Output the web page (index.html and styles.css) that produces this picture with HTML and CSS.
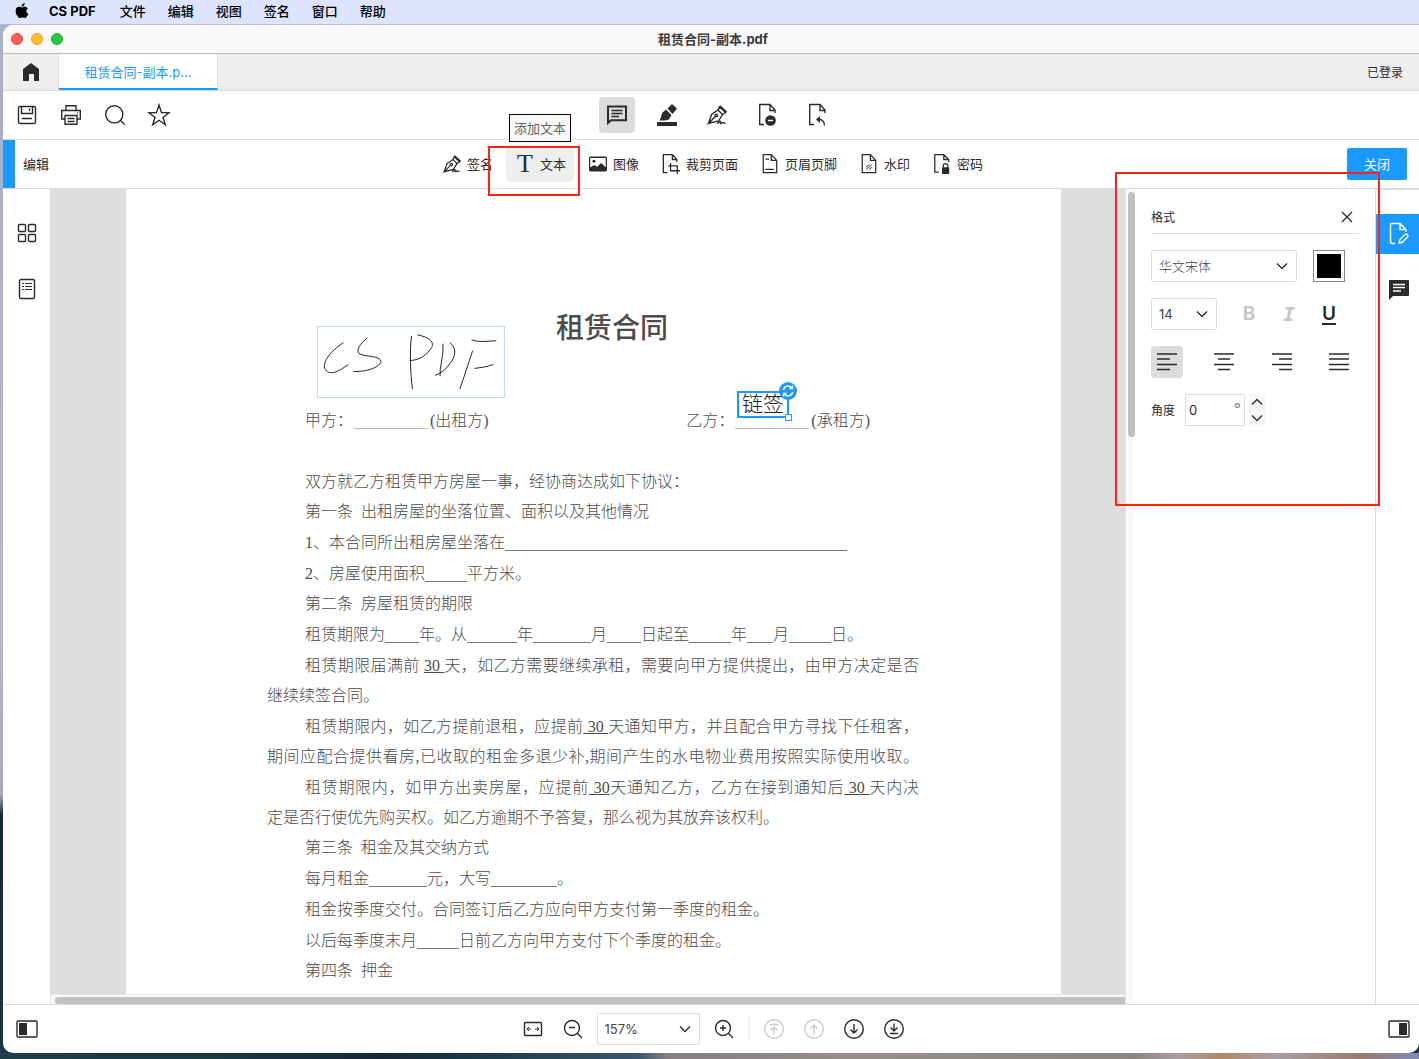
FILE: index.html
```html
<!DOCTYPE html>
<html lang="zh-CN">
<head>
<meta charset="utf-8">
<title>租赁合同-副本.pdf</title>
<link rel="stylesheet" href="styles.css">
</head>
<body>
<svg class="defs" aria-hidden="true">
  <symbol id="pen" viewBox="0 0 20 20"><path d="M1.500 18.500 4.500 9.500 11 5l4.500 4.500-4 6.500-10 2.500L8 11.800M11 5l1.500-3 6 5.500-3 2M12.500 2l.8-.8 6 5.500-.8.8"/><circle cx="9.200" cy="10.500" r="1.300"/><path d="M10 18.500c2-1 3-3 3.500-2s-1 2.500.5 2 1-1.200 2-.8.500 1 2.500.3"/></symbol>
  <symbol id="chevron" viewBox="0 0 12 12"><path d="m1 3.500 5 5 5-5"/></symbol>
</svg>

<nav class="menubar" aria-label="菜单栏">
  <svg class="apple" viewBox="0 0 14 17"><path d="M9.900 0c.1 1.100-.3 2-.9 2.700-.6.8-1.500 1.200-2.400 1.200C6.500 2.900 7 2 7.500 1.400 8.100.6 9.100.1 9.900 0ZM13.300 5.800c-1.100.7-1.700 1.600-1.700 2.800 0 1.400.8 2.500 2.100 3-.3.900-.8 1.800-1.400 2.600-.7 1-1.300 1.800-2.300 1.800s-1.400-.6-2.600-.6-1.600.6-2.600.6-1.700-.9-2.400-1.900C.9 12.300.2 10.300.2 8.500c0-2.900 1.800-4.400 3.700-4.400 1.100 0 2 .7 2.700.7.700 0 1.700-.8 3-.8 1.600 0 2.900.7 3.700 1.800Z"/></svg>
  <strong>CS PDF</strong>
  <a href="#">文件</a><a href="#">编辑</a><a href="#">视图</a><a href="#">签名</a><a href="#">窗口</a><a href="#">帮助</a>
</nav>

<div class="window">
  <header class="titlebar">
    <span class="lights"><i class="light red"></i><i class="light yellow"></i><i class="light green"></i></span>
    <strong>租赁合同-副本.pdf</strong>
  </header>

  <div class="tabs">
    <button class="home" aria-label="主页"><svg class="icon" viewBox="0 0 20 20"><path class="solid" d="M10 1 18 7v12h-5v-7H8v7H2V7Z"/></svg></button>
    <button class="tab">租赁合同-副本.p...</button>
    <span class="login">已登录</span>
  </div>

  <div class="toolbar">
    <div class="file-tools">
      <button aria-label="保存"><svg class="icon" viewBox="0 0 20 20"><rect x="1.500" y="1.500" width="17" height="17" rx="1.500"/><path d="M4.500 1.500v7h11v-7M5 13.500h10M12.500 3.500V6"/></svg></button>
      <button aria-label="打印"><svg class="icon" viewBox="0 0 20 20"><path d="M5 5V.7h10V5M4 14H.7V5.500h18.600V14H16M4 10.500h12v8.800H4ZM6.500 13.500h7M6.500 16.500h7"/><circle class="solid" cx="16.500" cy="8" r=".7"/></svg></button>
      <button aria-label="搜索"><svg class="icon" viewBox="0 0 20 20"><circle cx="9.300" cy="9.300" r="8.600"/><path d="m15.500 15.500 4.300 4.300"/></svg></button>
      <button aria-label="收藏"><svg class="icon" viewBox="0 0 20 20"><path d="m10 0 2.500 7.500 7.500.2-6 4.800 2.300 7.300L10 15.300l-6.300 4.500L6 12.500 0 7.700l7.500-.2Z"/></svg></button>
    </div>
    <div class="mode-tools">
      <button class="mode active" aria-label="注释"><svg class="icon" viewBox="0 0 20 20"><path class="bold" d="M1 18V1.500h18v13.700H4Z"/><path d="M4.500 5.500h11M4.500 8.500h11M4.500 11.500H12"/></svg></button>
      <button class="mode" aria-label="高亮"><svg class="icon" viewBox="0 0 20 20"><path class="solid" d="M0 17h20v4H0ZM2.500 15.500 4 12l1-4L9 4.500 14.500 10 12 14.500l-4 1ZM10.500 3.500 15-1l5 4.500-4.500 5.500Z"/></svg></button>
      <button class="mode" aria-label="签名"><svg class="icon"><use href="#pen"/></svg></button>
      <button class="mode" aria-label="删除页面"><svg class="icon" viewBox="0 0 20 20"><path d="M7 19.500H2.700V-.5H13L18 5v3M13 0v5.500h5"/><circle class="solid" cx="13.500" cy="15.500" r="5.300"/><path class="white" d="M11 15.500h5"/></svg></button>
      <button class="mode" aria-label="撤销页面"><svg class="icon" viewBox="0 0 20 20"><path d="M7 19.500H2.700V-.5H13L18 5v3M13 0v5.500h5M10.500 14.500c4-.5 7 1.500 7 6"/><path class="solid" d="m9 14.500 4-3.500v7Z"/></svg></button>
    </div>
  </div>

  <div class="editbar">
    <h2>编辑</h2>
    <div class="edit-tools">
      <button><svg class="icon"><use href="#pen"/></svg>签名</button>
      <div class="text-tool">
        <button class="active" aria-describedby="tip"><span class="big-t">T</span>文本</button>
        <span class="tooltip" id="tip" role="tooltip">添加文本</span>
        <span class="mark"></span>
      </div>
      <button><svg class="icon" viewBox="0 0 20 20"><rect x=".7" y="2.500" width="18.600" height="15" rx="1"/><circle class="solid" cx="5.500" cy="7" r="1.600"/><path class="solid" d="M1 17v-3l5-3 3 2 4.500-4 5.500 5v3Z"/></svg>图像</button>
      <button><svg class="icon" viewBox="0 0 20 20"><path d="M6 19.500H1.500V-.5h10L16.500 5v3M11.500-.5V5h5M9.500 9v8.500H20M7 12h10v9"/></svg>裁剪页面</button>
      <button><svg class="icon" viewBox="0 0 20 20"><path d="M2.500-.5h9L17.500 6v13.500h-15ZM11.500-.5V6h6M5 4.500h4M5 16h9"/></svg>页眉页脚</button>
      <button><svg class="icon" viewBox="0 0 20 20"><path d="M2.500-.5h9L17.500 6v13.500h-15ZM11.500-.5V6h6"/><path class="thin" d="m6.500 13.500 4-3M6.500 16l6.500-5M9.500 16.500l4-3"/></svg>水印</button>
      <button><svg class="icon" viewBox="0 0 20 20"><path d="M6.500 19H2V-.5h10L17.500 5v3M12-.5V5h5.500M11.500 14v-1.800a2.500 2.500 0 0 1 5 0V14"/><path class="solid" d="M10 13.500h8V21h-8Z"/></svg>密码</button>
    </div>
    <button class="close">关闭</button>
  </div>

  <main class="workspace">
    <aside class="rail left">
      <button aria-label="缩略图"><svg class="icon" viewBox="0 0 20 20"><rect x="1.500" y="1.500" width="7" height="7" rx="1"/><rect x="11.500" y="1.500" width="7" height="7" rx="1"/><rect x="1.500" y="11.500" width="7" height="7" rx="1"/><rect x="11.500" y="11.500" width="7" height="7" rx="1"/></svg></button>
      <button aria-label="目录"><svg class="icon" viewBox="0 0 20 20"><rect x="2.500" y=".5" width="15" height="19" rx="1.500"/><path class="thin" d="M5 4.500h2M8 4.500h7M5 7.500h2M8 7.500h7M5 10.500h2M8 10.500h7"/></svg></button>
    </aside>

    <section class="viewer">
      <div class="canvas">
        <article class="page">
          <h1>租赁合同</h1>
          <div class="parties">
            <span>甲方：<i class="blank party"></i>(出租方)</span>
            <span>乙方：<i class="blank party"></i>(承租方)</span>
          </div>
          <p>双方就乙方租赁甲方房屋一事，经协商达成如下协议：</p>
          <h3>第一条&nbsp; 出租房屋的坐落位置、面积以及其他情况</h3>
          <p>1、本合同所出租房屋坐落在<i class="blank address"></i></p>
          <p>2、房屋使用面积<i class="blank m"></i>平方米。</p>
          <h3>第二条&nbsp; 房屋租赁的期限</h3>
          <p>租赁期限为<i class="blank s"></i>年。从<i class="blank l"></i>年<i class="blank xl"></i>月<i class="blank s"></i>日起至<i class="blank m"></i>年<i class="blank xs"></i>月<i class="blank m"></i>日。</p>
          <p><span class="full">租赁期限届满前&nbsp;<u>30&nbsp;</u>天，如乙方需要继续承租，需要向甲方提供提出，由甲方决定是否</span>继续续签合同。</p>
          <p><span class="full">租赁期限内，如乙方提前退租，应提前<u>&nbsp;30&nbsp;</u>天通知甲方，并且配合甲方寻找下任租客，</span><span class="full">期间应配合提供看房,已收取的租金多退少补,期间产生的水电物业费用按照实际使用收取。</span></p>
          <p><span class="full">租赁期限内，如甲方出卖房屋，应提前<u>&nbsp;30</u>天通知乙方，乙方在接到通知后<u>&nbsp;30&nbsp;</u>天内决</span>定是否行使优先购买权。如乙方逾期不予答复，那么视为其放弃该权利。</p>
          <h3>第三条&nbsp; 租金及其交纳方式</h3>
          <p>每月租金<i class="blank xl"></i>元，大写<i class="blank xxl"></i>。</p>
          <p>租金按季度交付。合同签订后乙方应向甲方支付第一季度的租金。</p>
          <p>以后每季度末月<i class="blank m"></i>日前乙方向甲方支付下个季度的租金。</p>
          <h3>第四条&nbsp; 押金</h3>

          <svg class="signature" viewBox="0 0 187 71" role="img" aria-label="手写签名"><path d="M25 16C12 24 4 35 6 42c4 8 13 4 24-4M49 11c-8 7-10 11-9 15 4 5 22 2 23 9-1 7-19 11-28 10M94 9c-2 16-1 40 1 54M100 8c15 3 18 9 13 15-6 8-14 11-21 11M126 17c1 12-4 24-3 33M133 16c7 5 6 14 0 21-4 6-9 10-15 12M156 24c-4 12-9 28-13 39M155 13c8 3 17 1 25 1M158 42c6-1 11-1 19-4"/></svg>
          <div class="textbox">链签
            <svg class="rotate" viewBox="0 0 18 18"><circle cx="9" cy="9" r="9"/><path d="M4.500 8a4.500 4.500 0 0 1 8.500-1.500M13.500 10A4.500 4.500 0 0 1 5 11.500M10.500 6.500h3v-3M7.500 11.500h-3v3"/></svg>
            <i class="handle"></i>
          </div>
        </article>
      </div>
      <div class="hscroll"><i></i></div>
    </section>

    <aside class="panel">
      <div class="vscroll"><i></i></div>
      <form class="format">
        <div class="panel-head"><h2>格式</h2><button type="button" aria-label="关闭面板"><svg viewBox="0 0 12 12"><path d="m1 1 10 10M11 1 1 11"/></svg></button></div>
        <div class="row">
          <label class="select font"><select aria-label="字体"><option>华文宋体</option></select><svg><use href="#chevron"/></svg></label>
          <input type="color" value="#000000" aria-label="颜色">
        </div>
        <div class="row">
          <label class="select size"><select aria-label="字号"><option>14</option></select><svg><use href="#chevron"/></svg></label>
          <div class="styles">
            <button type="button" class="b off">B</button><button type="button" class="i off">I</button><button type="button" class="u">U</button>
          </div>
        </div>
        <div class="row aligns">
          <button type="button" class="active" aria-label="左对齐"><svg class="icon" viewBox="0 0 20 20"><path d="M0 2h20M0 7h13M0 12.500h20M0 17.500h13"/></svg></button>
          <button type="button" aria-label="居中"><svg class="icon" viewBox="0 0 20 20"><path d="M0 2h20M4 7h12M0 12.500h20M4 17.500h12"/></svg></button>
          <button type="button" aria-label="右对齐"><svg class="icon" viewBox="0 0 20 20"><path d="M0 2h20M7 7h13M0 12.500h20M7 17.500h13"/></svg></button>
          <button type="button" aria-label="两端对齐"><svg class="icon" viewBox="0 0 20 20"><path d="M0 2h20M0 7h20M0 12.500h20M0 17.500h20"/></svg></button>
        </div>
        <div class="row angle">
          <label for="angle">角度</label>
          <span class="degree"><input id="angle" type="text" value="0"><span>°</span></span>
          <span class="stepper">
            <button type="button" aria-label="增加"><svg viewBox="0 0 12 12"><path d="m1 8.500 5-5 5 5"/></svg></button>
            <button type="button" aria-label="减少"><svg><use href="#chevron"/></svg></button>
          </span>
        </div>
      </form>
      <span class="mark"></span>
    </aside>

    <aside class="rail right">
      <button class="active" aria-label="编辑格式"><svg class="icon" viewBox="0 0 20 20"><path d="M6 19.500H3Q1.500 19.500 1.500 18V1Q1.500-.5 3-.5h8L17 5.500V8M11-.5v6h6M10 19l1-3.500 5-5q1.500-1 2.500.5t-.5 2.500l-5 5Z"/></svg></button>
      <button aria-label="注释列表"><svg class="icon" viewBox="0 0 20 20"><path class="solid" d="M1 0h18q1 0 1 1v14q0 1-1 1H4l-4 4V1Q0 0 1 0Z"/><path class="white" d="M4 4.500h12M4 7.500h12M4 11h8"/></svg></button>
    </aside>
  </main>

  <footer class="statusbar">
    <button aria-label="左侧栏"><svg class="side" viewBox="0 0 22 18"><rect x="1" y="1" width="20" height="16" rx="1"/><path class="solid" d="M3 3h8v12H3Z"/></svg></button>
    <div class="zoom">
      <button aria-label="适合宽度"><svg class="icon" viewBox="0 0 20 20"><rect x="1.500" y="3.500" width="17" height="13" rx="1"/><path class="thin" d="M4 10h4M12 10h4M6 8l-2 2 2 2M14 8l2 2-2 2"/></svg></button>
      <button aria-label="缩小"><svg class="icon" viewBox="0 0 20 20"><circle cx="9" cy="9" r="7.500"/><path d="m14.500 14.500 4.500 4.500M6 8.500h6"/></svg></button>
      <label class="select scale"><select aria-label="缩放比例"><option>157%</option></select><svg><use href="#chevron"/></svg></label>
      <button aria-label="放大"><svg class="icon" viewBox="0 0 20 20"><circle cx="9" cy="9" r="7.500"/><path d="m14.500 14.500 4.500 4.500M6 9h6M9 6v6"/></svg></button>
      <i class="divider"></i>
      <div class="pager">
        <button disabled aria-label="第一页"><svg class="icon" viewBox="0 0 20 20"><circle cx="10" cy="10" r="9.300"/><path d="M6 5.500h8M10 15.500V8M6.500 11.500 10 8l3.500 3.500"/></svg></button>
        <button disabled aria-label="上一页"><svg class="icon" viewBox="0 0 20 20"><circle cx="10" cy="10" r="9.300"/><path d="M10 15V6M6.500 9.500 10 6l3.500 3.500"/></svg></button>
        <button aria-label="下一页"><svg class="icon" viewBox="0 0 20 20"><circle cx="10" cy="10" r="9.300"/><path d="M10 5v9M6.500 10.500 10 14l3.500-3.500"/></svg></button>
        <button aria-label="最后一页"><svg class="icon" viewBox="0 0 20 20"><circle cx="10" cy="10" r="9.300"/><path d="M6 14.500h8M10 4.500V12M6.500 8.500 10 12l3.500-3.500"/></svg></button>
      </div>
    </div>
    <button aria-label="右侧栏"><svg class="side" viewBox="0 0 22 18"><rect x="1" y="1" width="20" height="16" rx="1"/><path class="solid" d="M11 3h8v12h-8Z"/></svg></button>
  </footer>
</div>
</body>
</html>
```
FILE: styles.css
```css
:root {
  --blue: #1a9aff;
  --line: #dcdcdc;
  --ink: #2b2b2b;
  --red: #fb2317;
}

* { box-sizing: border-box; }

body {
  margin: 0;
  height: 100vh;
  display: flex;
  flex-direction: column;
  overflow: hidden;
  background:
    linear-gradient(90deg, #1d3d48 0, #1b3a42 15%, #162836 27%, #1c3a49 34%, #39566b 45%, #857f82 47%, #948d8b 60%, #8a8583 80%, #a99fa3 83%, #b08a68 86%, #a79fa3 90%, #9a7a70 96%, #8289b8) bottom / 100% 6px no-repeat,
    linear-gradient(#a9afcb 0, #b3b6c8 60%, #a9abb8 75%, #17283a 77%, #1b3542 100%);
  color: var(--ink);
  font: 13px/20px Inter, "Noto Sans CJK SC", sans-serif;
}

button {
  border: 0;
  padding: 0;
  background: none;
  color: inherit;
  font: inherit;
  display: flex;
  align-items: center;
  justify-content: center;
}

h1, h2, h3, p { margin: 0; font-weight: 400; }
h2 { font-size: 13px; }

svg { flex: none; fill: none; stroke: currentColor; stroke-width: 1.4; overflow: visible; }
.defs { position: absolute; width: 0; height: 0; }
.icon { width: 20px; height: 20px; }
.solid { fill: currentColor; stroke: none; }
.bold { stroke-width: 2; }
.thin { stroke-width: 1; }
.white { stroke: #fff; stroke-width: 1.5; }

.menubar {
  height: 25px;
  flex: none;
  display: flex;
  align-items: center;
  gap: 22px;
  padding: 0 15px 2px;
  background: #dde4fd;
  border-bottom: 1px solid #b9bed4;
  color: #000;
}
.menubar a { color: inherit; text-decoration: none; font-weight: 500; }
.menubar strong { font-weight: 700; margin: 0 2px 0 -2px; }
.apple { width: 14px; height: 16px; fill: #000; stroke: none; }

.window {
  flex: 1;
  min-height: 0;
  display: flex;
  flex-direction: column;
  margin: 0 0 6px 3px;
  border-radius: 10px 0 10px 10px;
  background: #fff;
  overflow: hidden;
}

.titlebar {
  flex: none;
  height: 29px;
  display: grid;
  grid-template-columns: 1fr auto 1fr;
  align-items: center;
  padding-left: 4px;
  background: #f9f9f9;
  border-bottom: 1px solid #bcbcbc;
  color: #3c3c3c;
}
.lights { display: flex; gap: 8px; padding-left: 4px; }
.light { width: 12px; height: 12px; border-radius: 50%; border: 1px solid; }
.red { background: #ff5f57; border-color: #e2463f; }
.yellow { background: #febc2e; border-color: #dfa023; }
.green { background: #28c840; border-color: #1dad2b; }

.tabs {
  flex: none;
  height: 37px;
  display: flex;
  background: #efefef;
  border-bottom: 1px solid var(--line);
}
.home { width: 56px; border-right: 1px solid var(--line); }
.tab {
  width: 159px;
  padding-top: 2px;
  background: #fff;
  border-right: 1px solid var(--line);
  border-bottom: 2px solid var(--blue);
  color: var(--blue);
}
.login { margin: auto 16px auto auto; padding-top: 2px; font-size: 12px; }

.toolbar {
  flex: none;
  height: 49px;
  display: grid;
  grid-template-columns: 1fr auto 1fr;
  align-items: center;
  padding-left: 12px;
  border-bottom: 1px solid var(--line);
}
.file-tools { display: flex; gap: 24px; padding-left: 2px; }
.mode-tools { display: flex; gap: 14px; }
.mode { width: 36px; height: 36px; border-radius: 4px; }
.active { background: #dcdcdc; }

.editbar {
  flex: none;
  height: 49px;
  display: grid;
  grid-template-columns: 1fr auto 1fr;
  align-items: center;
  border-bottom: 1px solid var(--line);
}
.editbar h2 {
  align-self: stretch;
  display: flex;
  align-items: center;
  padding-left: 8px;
  border-left: 12px solid var(--blue);
}
.edit-tools { display: flex; gap: 5px; padding-left: 2px; }
.edit-tools button { height: 36px; padding: 0 8px 0 10px; gap: 6px; border-radius: 6px; }
.edit-tools .icon { width: 18px; height: 18px; }
.edit-tools .active { background: #eee; }
.text-tool { position: relative; }
.big-t { width: 18px; font: 26px/26px "Liberation Serif", serif; }
.tooltip {
  position: absolute;
  left: 3px;
  bottom: 40px;
  padding: 3px 4px;
  border: 1px solid #000;
  background: #f8f8f8;
  color: #666;
  white-space: nowrap;
}
.mark { position: absolute; border: 2px solid var(--red); pointer-events: none; z-index: 2; }
.text-tool .mark { inset: 0 -6px -14px -18px; }
.close {
  justify-self: end;
  width: 60px;
  height: 32px;
  margin-right: 12px;
  border-radius: 2px;
  background: var(--blue);
  color: #fff;
}

.workspace { flex: 1; min-height: 0; display: flex; }
.rail { flex: none; display: flex; flex-direction: column; gap: 16px; padding-top: 24px; }
.rail button { height: 40px; }
.left { width: 47px; }
.right { width: 44px; border: solid var(--line); border-width: 1px 0 0 1px; }
.right .active { background: var(--blue); color: #fff; }
.right button { padding-left: 2px; }

.viewer { flex: 1; min-width: 0; display: flex; flex-direction: column; }
.canvas { flex: 1; min-height: 0; overflow: hidden; padding-left: 12px; background: #ddd; }
.hscroll {
  flex: none;
  height: 10px;
  padding: 2px 0 0 4px;
  border: solid #e6e6e6;
  border-width: 1px 0 0 1px;
  background: #fafafa;
}
.hscroll i { display: block; height: 7px; border-radius: 4px 0 0 4px; background: #c1c1c1; }

.page {
  position: relative;
  width: 935px;
  min-height: 100%;
  margin: 0 auto;
  padding: 120px 142px 40px 141px;
  background: #fff;
  color: #4c4c4c;
  font: 300 16px/30px "Liberation Serif", "Noto Sans CJK SC", serif;
}
.page h1 { font-size: 28px; line-height: 40px; font-weight: 500; text-align: center; color: #4c4c4c; padding-left: 38px; }
.parties { display: flex; justify-content: space-between; margin: 57px 0 31px; padding: 0 49px 0 38px; }
.page p, .page h3 { font-size: 16px; font-weight: 300; text-indent: 38px; }
.page p { margin-top: 1px; }
.full { display: block; text-align-last: justify; white-space: nowrap; }
.full + .full { text-indent: 0; }
.blank { display: inline-block; height: 16px; vertical-align: -3px; border-bottom: 1px solid #777; text-indent: 0; }
.xs { width: 26px; }
.s { width: 34px; }
.m { width: 42px; }
.l { width: 50px; }
.xl { width: 58px; }
.xxl { width: 66px; }
.address { width: 342px; }
.party { width: 74px; margin: 0 2px 0 1px; border-color: #bbb; }

.signature {
  position: absolute;
  left: 191px;
  top: 137px;
  width: 188px;
  height: 72px;
  border: 1px solid #b9e0ea;
  stroke: #222;
  stroke-width: 1;
}
.textbox {
  position: absolute;
  left: 611px;
  top: 202px;
  padding: 0 3px;
  border: 2px solid var(--blue);
  color: #222;
  font-size: 21px;
  line-height: 23px;
}
.rotate { position: absolute; right: -10px; top: -11px; width: 18px; height: 18px; stroke: #fff; }
.rotate circle { fill: var(--blue); stroke: none; }
.handle { position: absolute; right: -5px; bottom: -5px; width: 7px; height: 7px; border: 1px solid var(--blue); background: #fff; }

.panel { position: relative; flex: none; width: 250px; display: flex; border-left: 1px solid #e6e6e6; }
.panel .mark { left: -11px; top: -17px; right: -5px; height: 334px; }
.vscroll { width: 9px; padding: 3px 0 0 2px; background: #fafafa; }
.vscroll i { display: block; width: 7px; height: 245px; border-radius: 4px; background: #c1c1c1; }
.format { flex: 1; display: flex; flex-direction: column; gap: 16px; padding: 12px 16px; font-size: 12px; }
.format svg, .select svg { stroke-width: 1.3; }
.panel-head { height: 33px; display: flex; justify-content: space-between; align-items: center; border-bottom: 1px solid var(--line); padding-right: 6px; }
.panel-head h2 { padding-top: 2px; font-size: 12px; }
.panel-head svg { width: 12px; height: 12px; }
.row { display: flex; align-items: center; gap: 16px; height: 32px; }
.select { position: relative; display: flex; height: 32px; }
.select svg { position: absolute; right: 9px; top: 10px; width: 12px; height: 12px; pointer-events: none; }
.select select {
  appearance: none;
  width: 100%;
  padding: 0 7px;
  border: 1px solid var(--line);
  border-radius: 2px;
  background: #fff;
  color: #444;
  font: inherit;
  font-size: 13px;
}
.font { width: 146px; }
.select.font select { color: #444; font-weight: 300; }
.size { width: 66px; }
.scale { width: 103px; }
input[type="color"] { appearance: none; width: 32px; height: 32px; padding: 3px; border: 1px solid #888; background: #fff; }
input[type="color"]::-webkit-color-swatch-wrapper { padding: 0; }
input[type="color"]::-webkit-color-swatch { border: 0; border-radius: 0; }
.styles { display: flex; gap: 8px; }
.styles button { width: 32px; height: 32px; font-size: 19px; font-weight: 700; }
.styles .i { font-family: "DejaVu Sans Mono", monospace; font-style: italic; font-size: 20px; }
.styles .u { font-weight: 600; text-decoration: underline; text-decoration-thickness: 2px; text-underline-offset: 3px; }
.styles .off { color: #c8c8c8; }
.aligns { justify-content: space-between; gap: 0; padding-right: 4px; }
.aligns button { width: 32px; height: 32px; border-radius: 4px; }
.angle { gap: 4px; }
.angle label { width: 30px; padding-top: 2px; }
.degree { position: relative; }
.degree input { display: block; width: 60px; height: 32px; padding: 0 3px; border: 1px solid var(--line); border-radius: 2px; color: var(--ink); font: inherit; font-size: 13px; }
.degree span { position: absolute; right: 4px; top: 5px; font-size: 16px; color: #888; }
.stepper { display: grid; background: #f7f7f7; }
.stepper button { width: 16px; height: 16px; }
.stepper svg { width: 12px; height: 12px; }

.statusbar {
  flex: none;
  height: 49px;
  display: grid;
  grid-template-columns: 1fr auto 1fr;
  align-items: center;
  padding: 0 9px 0 13px;
  border-top: 1px solid var(--line);
}
.statusbar > button:first-child { justify-self: start; }
.statusbar > button:last-child { justify-self: end; }
.side { width: 22px; height: 18px; }
.zoom { display: flex; align-items: center; gap: 14px; }
.zoom > button:first-child { margin-right: 6px; }
.divider { width: 2px; height: 24px; background: #eee; }
.pager { display: flex; gap: 20px; }
button:disabled { color: #ccc; }
```
